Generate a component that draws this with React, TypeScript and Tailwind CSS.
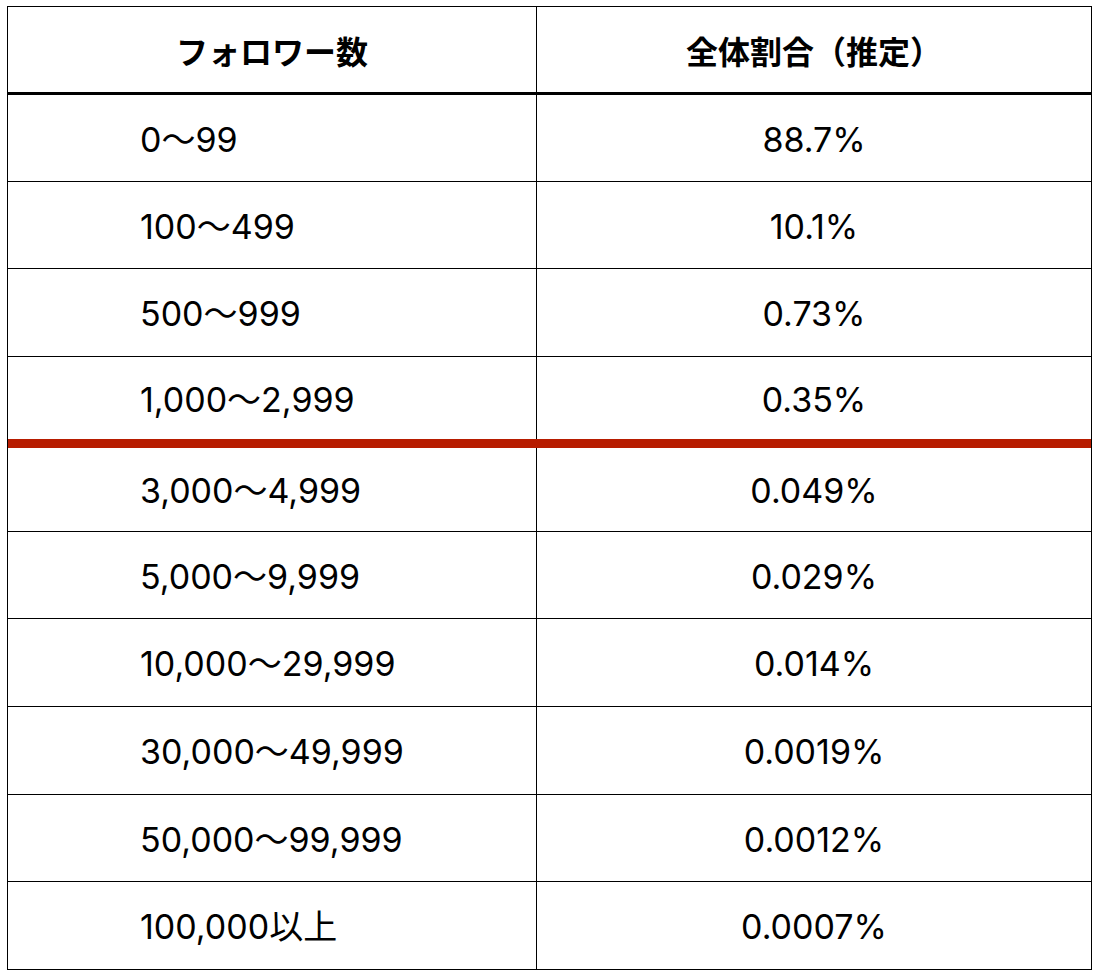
const rows: { range: string; share: string; h: string; red?: boolean }[] = [
  { range: '0〜99', share: '88.7%', h: 'h-[87px]' },
  { range: '100〜499', share: '10.1%', h: 'h-[87px]' },
  { range: '500〜999', share: '0.73%', h: 'h-[88px]' },
  { range: '1,000〜2,999', share: '0.35%', h: 'h-[91px]', red: true },
  { range: '3,000〜4,999', share: '0.049%', h: 'h-[84px]' },
  { range: '5,000〜9,999', share: '0.029%', h: 'h-[87px]' },
  { range: '10,000〜29,999', share: '0.014%', h: 'h-[88px]' },
  { range: '30,000〜49,999', share: '0.0019%', h: 'h-[88px]' },
  { range: '50,000〜99,999', share: '0.0012%', h: 'h-[87px]' },
  { range: '100,000以上', share: '0.0007%', h: 'h-[87px]' },
]

export default function App() {
  return (
    <div
      className="min-h-screen bg-white pl-[7px] pt-[6px] text-black"
      style={{ fontFamily: '"Noto Sans CJK JP", "Noto Sans", sans-serif' }}
    >
      <div className="w-[1085px] border border-black">
        <div className="grid h-[88px] grid-cols-[529px_1fr] border-b-[3px] border-black">
          <div className="flex items-center justify-center border-r border-black text-[32px] font-bold">
            フォロワー数
          </div>
          <div className="flex items-center justify-center text-[32px] font-bold">全体割合（推定）</div>
        </div>
        {rows.map((r, i) => (
          <div
            key={r.range}
            className={`grid grid-cols-[529px_1fr] ${r.h} ${
              r.red ? 'border-b-[9px] border-[#b71c00]' : i < rows.length - 1 ? 'border-b border-black' : ''
            }`}
            style={{ fontFamily: 'Inter, "Noto Sans CJK JP", sans-serif' }}
          >
            <div className="flex items-center border-r border-black pl-[132px] pt-[2px] text-[34px]">{r.range}</div>
            <div className="flex items-center justify-center pt-[2px] text-[34px]">{r.share}</div>
          </div>
        ))}
      </div>
    </div>
  )
}
